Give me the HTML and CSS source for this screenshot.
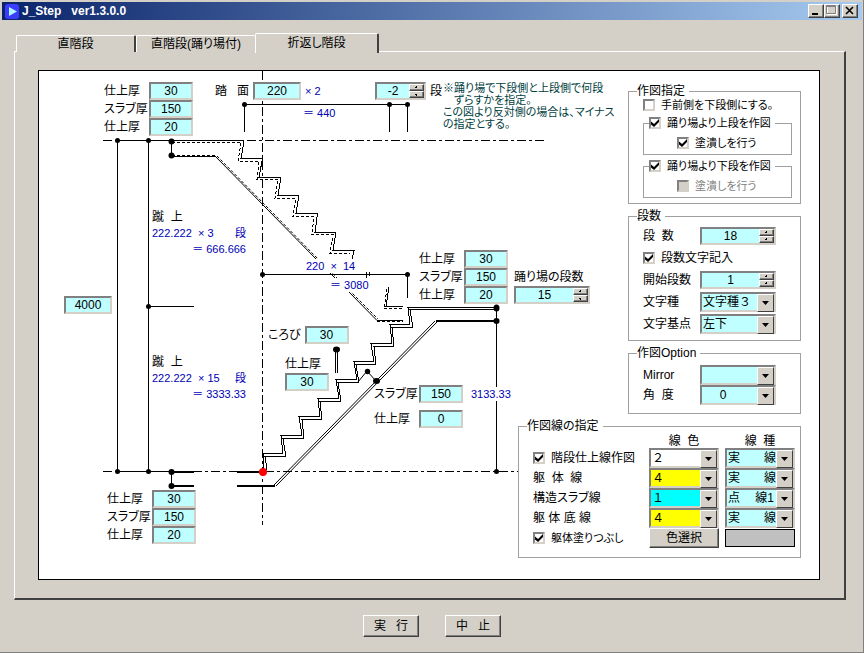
FILE: index.html
```html
<!DOCTYPE html>
<html lang="ja">
<head>
    <meta charset="UTF-8">
    <meta name="viewport" content="width=device-width, initial-scale=1.0">
    <title>J_Step ver1.3.0.0</title>
    <link rel="stylesheet" href="styles.css">
</head>
<body>
    <div class="window">
        <header class="titlebar">
            <svg class="app-icon" width="14" height="15" viewBox="0 0 14 15" aria-hidden="true">
                <rect width="14" height="15" rx="3" fill="#3c3cff"/>
                <path d="M4 3 L12 7.5 L4 12 Z" fill="#b4f4ff"/>
            </svg>
            <h1 class="title">J_Step &nbsp; ver1.3.0.0</h1>
            <div class="window-buttons">
                <button type="button" aria-label="最小化"><svg width="12" height="10" viewBox="0 0 12 10"><path d="M3 9H9" stroke="#000" stroke-width="2"/></svg></button>
                <button type="button" aria-label="最大化" disabled><svg width="12" height="10" viewBox="0 0 12 10"><path d="M2.5 1.5H11.5V9.5H2.5Z" fill="none" stroke="#fff"/><path d="M1.5 .5H10.5V8.5H1.5ZM1.5 1.5H10.5" fill="none" stroke="#808080"/></svg></button>
                <button type="button" class="close" aria-label="閉じる"><svg width="12" height="10" viewBox="0 0 12 10"><path d="M3 2L10 9M10 2L3 9" stroke="#000" stroke-width="1.6"/></svg></button>
            </div>
        </header>

        <nav class="tabs" role="tablist">
            <button type="button" class="tab" role="tab">直階段</button>
            <button type="button" class="tab" role="tab">直階段(踊り場付)</button>
            <button type="button" class="tab active" role="tab" aria-selected="true">折返し階段</button>
        </nav>

        <main class="panel">
            <div class="sheet">
                <div class="drawing">
                    <svg width="580" height="508" viewBox="39 71 580 508" aria-hidden="true">
                        <!-- center lines -->
                        <g class="line center-line">
                            <path d="M103 140.5H544"/>
                            <path d="M103 471.5H518"/>
                            <path d="M262.5 71V525"/>
                        </g>
                        <!-- dimension lines -->
                        <g class="line">
                            <path d="M117 140.5H244M117 471.5H172"/>
                            <path d="M117.5 140V472M148.5 140V472M148 306.5H194"/>
                            <path d="M171.5 141V156M171.5 472V486"/>
                            <path d="M244.5 132V104.5H407.5V132M389.5 104V132"/>
                            <path d="M262 274.5H407.5V298"/>
                            <path d="M496.5 308V471"/>
                            <path d="M335.5 350V373M337.5 350V373"/>
                            <path d="M366.5 272V278M369.5 272V276"/>
                        </g>
                        <!-- upper flight -->
                        <g class="line">
                            <path d="M244 141L241 158.5H262.5L259 177.5H281L278 195.5H299L296 213.5H317.5L315 232.5H336L333 250.5H354L352 260"/>
                            <path class="dash" d="M172 142.5H241L238 161.5H259L257 179.5H278L275 198.5H296L293 216.5H314L312 234.5H333L330 253.5H350"/>
                            <path d="M389 287L386 306.5H403"/>
                            <path class="dash" d="M387 289L384 308.5H403"/>
                            <path d="M172 156.5H215"/>
                            <path class="dash thick" d="M172 156H215M377 321H403"/>
                        </g>
                        <g class="slope">
                            <path d="M215 156L318 261M327 270L336 279M348 291L377 320.5H403"/>
                            <path class="dash" d="M217 156L319 260M329 270L337 278M349 290L378 319"/>
                        </g>
                        <!-- lower flight -->
                        <g class="line">
                            <path d="M264 470L263 453.5H283L281 435.5H302L299 416.5H320L318 398.5H339L336 379.5H357L354 361.5H374L371 343.5H392L390 324.5H410L408 307.5H496"/>
                            <path d="M267 470L265 456.5H286L283 438.5H304L302 419.5H322L320 401.5H341L338 382.5H359L356 364.5H376L374 346.5H394L392 327.5H413L410 309.5H496"/>
                            <path class="thick" d="M171 472H194M237 472H262M171 486H194M237 486H275M436 321H496"/>
                        </g>
                        <g class="slope">
                            <path d="M274 485L435 321M276 486L437 322"/>
                            <path d="M358 382L367 371L376 381"/>
                        </g>
                        <!-- end points -->
                        <g class="dots">
                            <circle cx="117.5" cy="140.5" r="2.5"/>
                            <circle cx="148.5" cy="140.5" r="2.5"/>
                            <circle cx="171.5" cy="141.5" r="3"/>
                            <circle cx="171.5" cy="155.5" r="3"/>
                            <circle cx="148.5" cy="306.5" r="2.5"/>
                            <circle cx="117.5" cy="471.5" r="2.5"/>
                            <circle cx="148.5" cy="471.5" r="2.5"/>
                            <circle cx="171.5" cy="472" r="3"/>
                            <circle cx="171.5" cy="486" r="3"/>
                            <circle cx="244.5" cy="104.5" r="2.5"/>
                            <circle cx="389.5" cy="104.5" r="2.5"/>
                            <circle cx="407.5" cy="104.5" r="2.5"/>
                            <circle cx="262.5" cy="274.5" r="2.5"/>
                            <circle cx="407.5" cy="274.5" r="2.5"/>
                            <ellipse cx="336.5" cy="349.5" rx="3.5" ry="3"/>
                            <circle cx="367.5" cy="371.5" r="2.7"/>
                            <ellipse cx="376.5" cy="381" rx="3.5" ry="3"/>
                            <ellipse cx="496.5" cy="308" rx="3" ry="3.5"/>
                            <circle cx="496.5" cy="321" r="3"/>
                            <circle cx="496.5" cy="471.5" r="2.5"/>
                            <circle class="origin" cx="263" cy="472" r="4"/>
                        </g>
                    </svg>

                    <div class="pin stack stack-top">
                        <label for="top-finish1">仕上厚</label><input type="text" id="top-finish1" value="30">
                        <label for="top-slab">スラブ厚</label><input type="text" id="top-slab" value="150">
                        <label for="top-finish2">仕上厚</label><input type="text" id="top-finish2" value="20">
                    </div>

                    <div class="pin tread">
                        <label for="tread">踏&nbsp;&nbsp; 面</label>
                        <input type="text" id="tread" value="220">
                        <span class="dim">× 2</span>
                    </div>
                    <span class="pin dim tread-total">＝ 440</span>

                    <div class="pin shift">
                        <span class="spinner">
                            <input type="number" id="shift" value="-2">
                            <span class="spin"><button type="button" aria-label="増やす"></button><button type="button" aria-label="減らす"></button></span>
                        </span>
                        <label for="shift">段</label>
                    </div>
                    <p class="pin note">※踊り場で下段側と上段側で何段<br>　ずらすかを指定。<br>この図より反対側の場合は、マイナス<br>の指定とする。</p>

                    <input type="text" class="pin height" value="4000" aria-label="階高">

                    <div class="pin riser riser-upper">
                        <span class="caption">蹴&nbsp; 上</span>
                        <span class="dim count"><span>222.222</span><span>× 3</span><span>段</span></span>
                        <span class="dim total">＝ 666.666</span>
                    </div>
                    <div class="pin riser riser-lower">
                        <span class="caption">蹴&nbsp; 上</span>
                        <span class="dim count"><span>222.222</span><span>× 15</span><span>段</span></span>
                        <span class="dim total">＝ 3333.33</span>
                    </div>

                    <span class="pin dim run">220 &nbsp;× &nbsp;14</span>
                    <span class="pin dim run-total">＝ 3080</span>

                    <div class="pin stack stack-landing">
                        <label for="landing-finish1">仕上厚</label><input type="text" id="landing-finish1" value="30">
                        <label for="landing-slab">スラブ厚</label><input type="text" id="landing-slab" value="150">
                        <label for="landing-finish2">仕上厚</label><input type="text" id="landing-finish2" value="20">
                    </div>
                    <div class="pin landing-steps">
                        <label for="landing-steps">踊り場の段数</label>
                        <span class="spinner wide">
                            <input type="number" id="landing-steps" value="15">
                            <span class="spin"><button type="button" aria-label="増やす"></button><button type="button" aria-label="減らす"></button></span>
                        </span>
                    </div>

                    <div class="pin nosing">
                        <label for="nosing">ころび</label>
                        <input type="text" id="nosing" value="30">
                    </div>
                    <div class="pin step-finish">
                        <label for="step-finish">仕上厚</label>
                        <input type="text" id="step-finish" value="30">
                    </div>

                    <div class="pin stack stack-slab">
                        <label for="slab">スラブ厚</label><input type="text" id="slab" value="150">
                        <label for="slab-finish">仕上厚</label><input type="text" id="slab-finish" value="0">
                    </div>
                    <span class="pin dim level">3133.33</span>

                    <div class="pin stack stack-bottom">
                        <label for="bottom-finish1">仕上厚</label><input type="text" id="bottom-finish1" value="30">
                        <label for="bottom-slab">スラブ厚</label><input type="text" id="bottom-slab" value="150">
                        <label for="bottom-finish2">仕上厚</label><input type="text" id="bottom-finish2" value="20">
                    </div>
                </div>

                <div class="settings">
                    <fieldset class="group">
                        <legend>作図指定</legend>
                        <div class="group-body">
                            <label class="check small"><input type="checkbox">手前側を下段側にする。</label>
                            <fieldset class="subgroup">
                                <legend><label class="check small"><input type="checkbox" checked>踊り場より上段を作図</label></legend>
                                <label class="check small"><input type="checkbox" checked>塗潰しを行う</label>
                            </fieldset>
                            <fieldset class="subgroup">
                                <legend><label class="check small"><input type="checkbox" checked>踊り場より下段を作図</label></legend>
                                <label class="check small disabled"><input type="checkbox" disabled>塗潰しを行う</label>
                            </fieldset>
                        </div>
                    </fieldset>

                    <fieldset class="group">
                        <legend>段数</legend>
                        <div class="group-body form-rows">
                            <label for="steps">段&nbsp; 数</label>
                            <span class="spinner wide">
                                <input type="number" id="steps" value="18">
                                <span class="spin"><button type="button" aria-label="増やす"></button><button type="button" aria-label="減らす"></button></span>
                            </span>
                            <label class="check full-row"><input type="checkbox" checked>段数文字記入</label>
                            <label for="start-step">開始段数</label>
                            <span class="spinner wide">
                                <input type="number" id="start-step" value="1">
                                <span class="spin"><button type="button" aria-label="増やす"></button><button type="button" aria-label="減らす"></button></span>
                            </span>
                            <label for="char-type">文字種</label>
                            <span class="combo"><select id="char-type"><option>文字種３</option></select></span>
                            <label for="char-base">文字基点</label>
                            <span class="combo"><select id="char-base"><option>左下</option></select></span>
                        </div>
                    </fieldset>

                    <fieldset class="group">
                        <legend>作図Option</legend>
                        <div class="group-body form-rows compact">
                            <label for="mirror">Mirror</label>
                            <span class="combo"><select id="mirror"><option></option></select></span>
                            <label for="angle">角&nbsp; 度</label>
                            <span class="combo centered"><select id="angle"><option>0</option></select></span>
                        </div>
                    </fieldset>

                    <fieldset class="group group-wide">
                        <legend>作図線の指定</legend>
                        <div class="group-body line-rows">
                            <span class="column-title first">線&nbsp; 色</span>
                            <span class="column-title">線&nbsp; 種</span>

                            <label class="check"><input type="checkbox" checked>階段仕上線作図</label>
                            <span class="combo"><select class="white" aria-label="階段仕上線 線色"><option>２</option></select></span>
                            <span class="combo"><select aria-label="階段仕上線 線種"><option>実　　線</option></select></span>

                            <label for="body-color">躯&nbsp; 体&nbsp; 線</label>
                            <span class="combo"><select id="body-color" class="yellow"><option>４</option></select></span>
                            <span class="combo"><select aria-label="躯体線 線種"><option>実　　線</option></select></span>

                            <label for="slab-color">構造スラブ線</label>
                            <span class="combo"><select id="slab-color" class="cyan"><option>１</option></select></span>
                            <span class="combo"><select aria-label="構造スラブ線 線種"><option>点　 線1</option></select></span>

                            <label for="bottom-color">躯 体 底 線</label>
                            <span class="combo"><select id="bottom-color" class="yellow"><option>４</option></select></span>
                            <span class="combo"><select aria-label="躯体底線 線種"><option>実　　線</option></select></span>

                            <label class="check small"><input type="checkbox" checked>躯体塗りつぶし</label>
                            <button type="button" class="button">色選択</button>
                            <span class="swatch"></span>
                        </div>
                    </fieldset>
                </div>
            </div>
        </main>

        <footer class="actions">
            <button type="button" class="button">実&nbsp;&nbsp; 行</button>
            <button type="button" class="button">中&nbsp;&nbsp; 止</button>
        </footer>
    </div>

    <script>
        // Up / down buttons of the spinners
        document.querySelectorAll('.spinner').forEach(function(spinner) {
            const input = spinner.querySelector('input');
            const buttons = spinner.querySelectorAll('button');
            buttons[0].onclick = function() { input.stepUp(); };
            buttons[1].onclick = function() { input.stepDown(); };
        });
    </script>
</body>
</html>
```

FILE: styles.css
```css
:root {
    --face: #d4d0c8;
    --shadow: #808080;
    --dark: #404040;
    --field: #c0ffff;
    --dim: #0000b4;
    --note: #004040;
}

* {
    margin: 0;
    padding: 0;
    box-sizing: border-box;
}

body {
    background-color: var(--face);
    color: #000;
    font-family: "Liberation Sans", "Noto Sans CJK JP", sans-serif;
    font-size: 12px;
    line-height: 14px;
    font-feature-settings: "palt";
}

button,
input,
select {
    font: inherit;
    font-feature-settings: inherit;
    color: inherit;
}

.window {
    min-height: 100vh;
    padding: 2px 1px 0 2px;
    border-right: 1px solid var(--shadow);
    border-bottom: 1px solid var(--shadow);
}

/* Title bar */
.titlebar {
    display: flex;
    align-items: center;
    height: 18px;
    padding: 0 4px 0 3px;
    background: linear-gradient(to right, #0a246a, #a6caf0);
    color: #fff;
}

.title {
    flex: 1;
    margin-left: 3px;
    font-size: 12px;
}

.window-buttons {
    display: flex;
}

.window-buttons button {
    display: flex;
    width: 16px;
    height: 14px;
}

.window-buttons .close {
    margin-left: 2px;
}

.window-buttons button,
.button,
.spin button {
    background-color: var(--face);
    border: 1px solid;
    border-color: #fff var(--dark) var(--dark) #fff;
    box-shadow: inset -1px -1px var(--shadow);
}

/* Tabs */
.tabs {
    display: flex;
    align-items: flex-end;
    height: 32px;
    padding-left: 14px;
}

.tab {
    width: 120px;
    height: 17px;
    background-color: var(--face);
    border: 1px solid #fff;
    border-right: 2px solid var(--dark);
    border-bottom: none;
    border-radius: 2px 2px 0 0;
}

.tab.active {
    position: relative;
    width: 124px;
    height: 20px;
    margin-bottom: -1px;
    padding-bottom: 2px;
}

.tab:nth-child(2) {
    width: 119px;
    border-right: none;
}

/* Tab page */
.panel {
    margin: -1px 16px 0 12px;
    padding: 18px 24px 18px 23px;
    border: 1px solid #fff;
    border-right: 2px solid var(--dark);
    border-bottom: 2px solid var(--dark);
}

.sheet {
    display: grid;
    background-color: #fff;
    border: 1px solid #000;
}

.drawing,
.settings {
    grid-area: 1 / 1;
}

/* Stair section */
.drawing {
    position: relative;
}

.drawing svg {
    display: block;
}

.line,
.slope {
    fill: none;
    stroke: #000;
    stroke-width: 1;
}

.line {
    shape-rendering: crispEdges;
}

.center-line {
    stroke-dasharray: 9 3 3 3;
}

.dash {
    stroke-dasharray: 3 2;
}

.thick {
    stroke-width: 2;
}

.origin {
    fill: #f00;
}

.pin {
    position: absolute;
    white-space: nowrap;
}

input[type="text"],
.spinner,
.combo select {
    height: 18px;
    background-color: var(--field);
    border: 2px solid;
    border-color: var(--shadow) var(--face) var(--face) var(--shadow);
    border-radius: 0;
    outline: none;
}

input[type="text"] {
    width: 44px;
    text-align: center;
}

.dim {
    color: var(--dim);
    font-size: 11px;
    background-color: #fff;
}

.stack {
    display: grid;
    grid-template-columns: 45px 44px;
    grid-auto-rows: 18px;
    align-items: center;
}

.stack-top { left: 65px; top: 11px; }
.stack-landing { left: 380px; top: 179px; }
.stack-slab { left: 335px; top: 314px; row-gap: 7px; }
.stack-bottom { left: 68px; top: 419px; }

.tread,
.shift,
.nosing {
    display: flex;
    align-items: center;
    gap: 4px;
}

.tread { left: 176px; top: 11px; }
.tread input { width: 48px; }
.tread-total { left: 264px; top: 35px; }
.shift { left: 336px; top: 11px; }
.height { left: 25px; top: 225px; }
.drawing .height { width: 48px; }

.note {
    left: 404px;
    top: 11px;
    font-size: 11px;
    line-height: 12px;
    color: var(--note);
}

.riser {
    display: grid;
    row-gap: 2px;
}

.riser-upper { left: 113px; top: 139px; }
.riser-lower { left: 113px; top: 284px; }

.riser .count {
    display: grid;
    grid-template-columns: 46px 37px auto;
}

.riser .total {
    justify-self: end;
    background: none;
}

.run { left: 267px; top: 188px; }
.run-total { left: 291px; top: 207px; }
.level { left: 432px; top: 316px; }

.landing-steps,
.step-finish {
    display: grid;
    row-gap: 2px;
}

.landing-steps { left: 475px; top: 199px; }
.nosing { left: 229px; top: 255px; }
.step-finish { left: 246px; top: 286px; }

/* Spinner */
.spinner {
    display: flex;
    width: 51px;
}

.spinner.wide {
    width: 76px;
}

.spinner input {
    flex: 1;
    min-width: 0;
    background: none;
    border: none;
    outline: none;
    text-align: center;
    appearance: textfield;
    -moz-appearance: textfield;
}

.spinner input::-webkit-inner-spin-button {
    display: none;
}

.spin {
    display: grid;
    width: 15px;
}

.spin button {
    background-image: radial-gradient(circle, #000 1px, transparent 1px);
}

/* Settings */
.settings {
    display: flex;
    flex-direction: column;
    align-items: flex-end;
    gap: 5px;
    padding: 13px 18px 0 0;
    pointer-events: none;
}

.group {
    width: 173px;
    padding: 0 8px 5px;
    border: 1px solid #a0a0a0;
    pointer-events: auto;
}

.group-wide {
    width: 283px;
    padding: 0 5px 9px 8px;
}

.group legend {
    padding-right: 4px;
}

.group-body {
    padding-left: 6px;
}

.check {
    display: flex;
    align-items: center;
    gap: 6px;
    white-space: nowrap;
}

.check.small {
    font-size: 11px;
}

.check input {
    display: grid;
    place-content: center;
    width: 12px;
    height: 12px;
    background-color: #fff;
    border: 2px solid;
    border-color: var(--shadow) var(--face) var(--face) var(--shadow);
    appearance: none;
}

.check input:checked::before {
    content: "";
    width: 8px;
    height: 8px;
    background-color: #000;
    clip-path: polygon(0 30%, 38% 62%, 100% 0, 100% 38%, 38% 100%, 0 68%);
}

.check.disabled {
    color: var(--shadow);
}

.check input:disabled {
    background-color: var(--face);
}

.subgroup {
    margin-top: 4px;
    padding: 6px 4px 4px 33px;
    border: 1px solid #a0a0a0;
}

.subgroup legend {
    margin-left: -28px;
}

.form-rows {
    display: grid;
    grid-template-columns: 57px 76px;
    grid-auto-rows: 22px;
    align-items: center;
    padding-top: 2px;
}

.form-rows.compact {
    grid-auto-rows: 20px;
    padding: 5px 0 3px 6px;
}

.full-row {
    grid-column: 1 / -1;
}

.combo {
    display: grid;
}

.combo select,
.combo::after {
    grid-area: 1 / 1;
}

.combo select {
    width: 100%;
    height: 20px;
    padding-left: 1px;
    font-feature-settings: normal;
    appearance: none;
}

.combo::after {
    content: "";
    justify-self: end;
    width: 15px;
    height: 16px;
    margin: 2px 2px 0 0;
    background: var(--face) url("data:image/svg+xml,%3Csvg xmlns='http://www.w3.org/2000/svg' width='7' height='4'%3E%3Cpath d='M0 0H7L3.5 4Z'/%3E%3C/svg%3E") center no-repeat;
    border: 1px solid;
    border-color: #fff var(--dark) var(--dark) #fff;
    pointer-events: none;
}

.combo.centered select {
    padding-right: 30px;
    padding-left: 0;
    text-align: center;
    text-align-last: center;
}

.combo .white { background-color: #fff; }
.combo .yellow { background-color: #ff0; }
.combo .cyan { background-color: #0ff; }

.line-rows {
    display: grid;
    grid-template-columns: 1fr 70px 70px;
    grid-template-rows: 15px;
    grid-auto-rows: 20px;
    column-gap: 6px;
    align-items: center;
}

.column-title {
    text-align: center;
}

.column-title.first {
    grid-column: 2;
}

.line-rows .button {
    height: 20px;
}

.swatch {
    height: 18px;
    background-color: #c0c0c0;
    border: 1px solid #000;
}

/* Bottom buttons */
.actions {
    display: flex;
    justify-content: center;
    gap: 26px;
    padding: 15px 0;
}

.actions .button {
    width: 56px;
    height: 22px;
}
```
